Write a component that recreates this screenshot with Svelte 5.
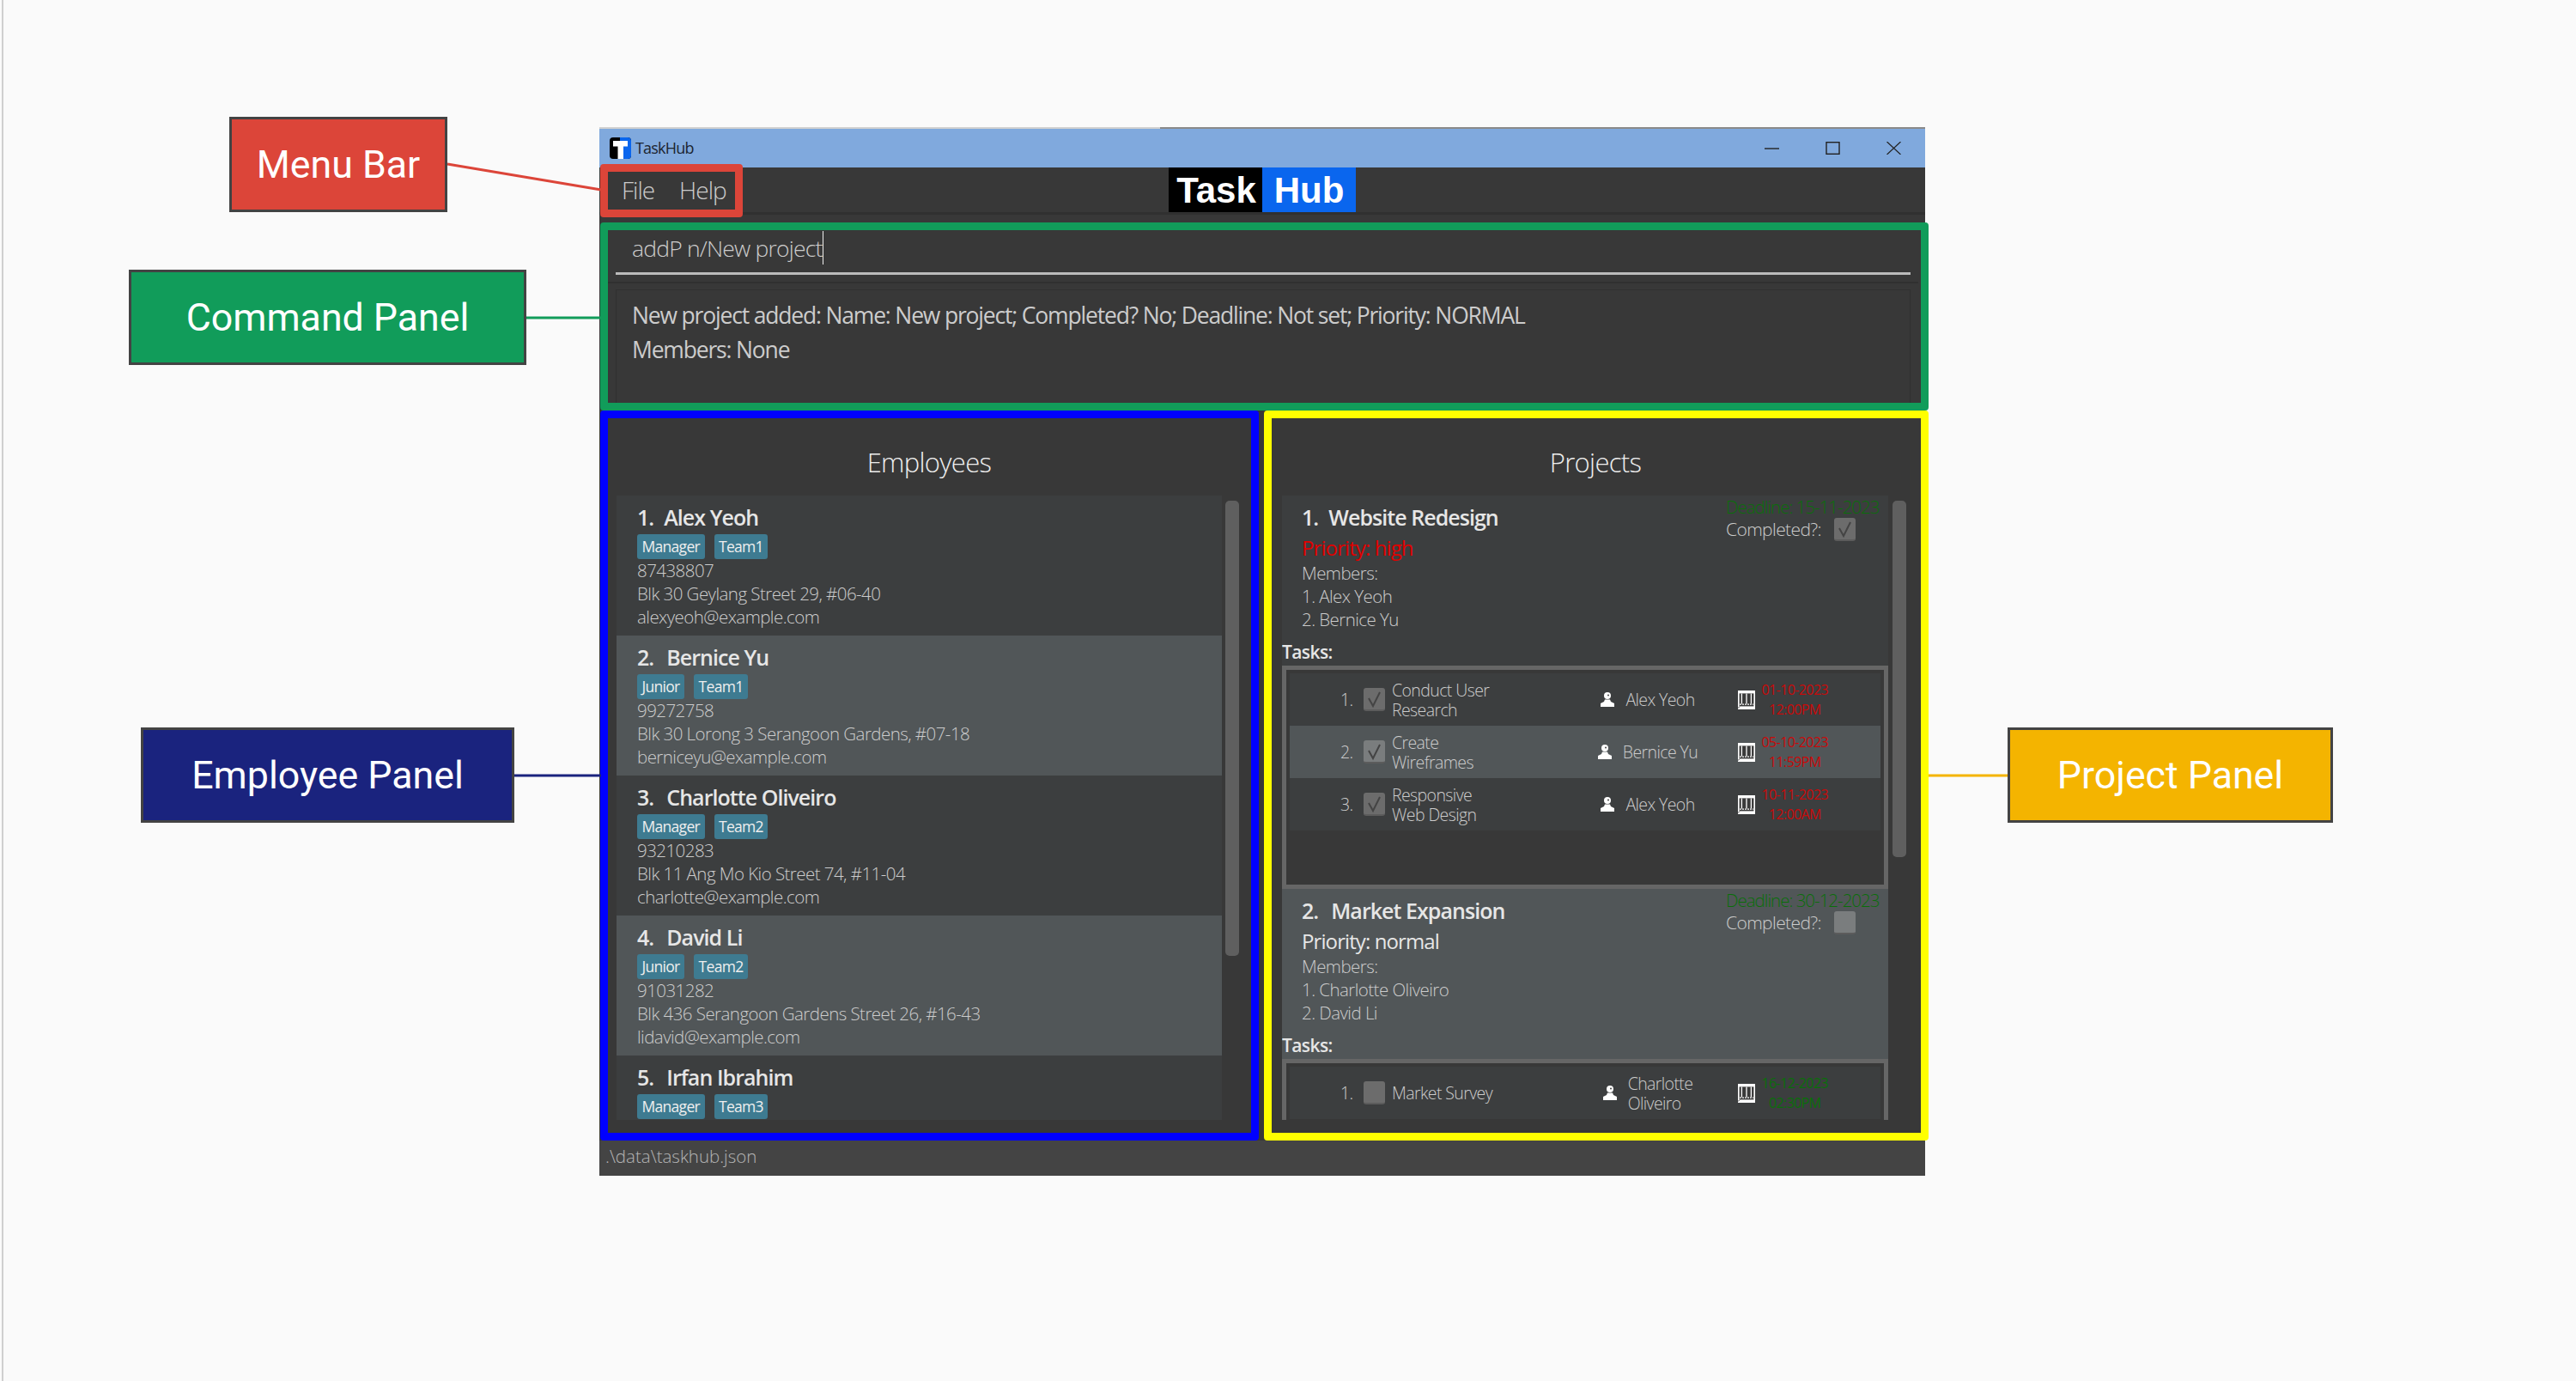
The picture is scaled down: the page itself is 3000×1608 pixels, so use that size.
<script>
  const employees = [
    { name: 'Alex Yeoh', tags: ['Manager', 'Team1'], lines: ['87438807', 'Blk 30 Geylang Street 29, #06-40', 'alexyeoh@example.com'] },
    { name: 'Bernice Yu', tags: ['Junior', 'Team1'], lines: ['99272758', 'Blk 30 Lorong 3 Serangoon Gardens, #07-18', 'berniceyu@example.com'] },
    { name: 'Charlotte Oliveiro', tags: ['Manager', 'Team2'], lines: ['93210283', 'Blk 11 Ang Mo Kio Street 74, #11-04', 'charlotte@example.com'] },
    { name: 'David Li', tags: ['Junior', 'Team2'], lines: ['91031282', 'Blk 436 Serangoon Gardens Street 26, #16-43', 'lidavid@example.com'] },
    { name: 'Irfan Ibrahim', tags: ['Manager', 'Team3'], lines: [] }
  ];
  const projects = [
    { name: 'Website Redesign', priority: 'high', deadline: '15-11-2023', done: true, members: ['Alex Yeoh', 'Bernice Yu'],
      tasks: [
        { name: 'Conduct User Research', who: 'Alex Yeoh', date: '01-10-2023', time: '12:00PM', done: true, late: true },
        { name: 'Create Wireframes', who: 'Bernice Yu', date: '05-10-2023', time: '11:59PM', done: true, late: true },
        { name: 'Responsive Web Design', who: 'Alex Yeoh', date: '10-11-2023', time: '12:00AM', done: true, late: true }
      ] },
    { name: 'Market Expansion', priority: 'normal', deadline: '30-12-2023', done: false, members: ['Charlotte Oliveiro', 'David Li'],
      tasks: [
        { name: 'Market Survey', who: 'Charlotte Oliveiro', date: '16-12-2023', time: '02:30PM', done: false, late: false }
      ] }
  ];
</script>

{#snippet check(done)}
  <span class="check">
    {#if done}
      <svg viewBox="0 0 25 27" width="25" height="27"><polyline points="6,12 11,21 19,5" fill="none" stroke="#444" stroke-width="2"/></svg>
    {/if}
  </span>
{/snippet}

<div class="page">
  <div class="window">
    <header class="titlebar">
      <div class="title">
        <svg class="appicon" viewBox="0 0 25 25" width="25" height="25">
          <rect width="25" height="25" rx="4" fill="#000"/>
          <path d="M12 0h9a4 4 0 0 1 4 4v17a4 4 0 0 1-4 4h-9z" fill="#0a66ee"/>
          <path d="M4 4h17v6.5h-5V25h-6.5V10.5H4z" fill="#fff"/>
        </svg>
        <span>TaskHub</span>
      </div>
      <div class="winctl">
        <svg viewBox="0 0 17 15" width="17" height="15"><path d="M0 8h17" stroke="#222" stroke-width="1.4"/></svg>
        <svg viewBox="0 0 17 15" width="17" height="15"><rect x="1" y="0.7" width="15" height="13.6" fill="none" stroke="#222" stroke-width="1.4"/></svg>
        <svg viewBox="0 0 17 15" width="17" height="15"><path d="M0.5 0l16 15M16.5 0l-16 15" stroke="#222" stroke-width="1.2"/></svg>
      </div>
    </header>

    <nav class="menubar">
      <div class="menu"><span>File</span><span>Help</span></div>
      <div class="logo"><span class="l-task">Task</span><span class="l-hub">Hub</span></div>
    </nav>

    <section class="command">
      <div class="input"><span class="typed">addP n/New project</span><span class="caret"></span></div>
      <div class="sep"></div>
      <div class="result">
        <p>New project added: Name: New project; Completed? No; Deadline: Not set; Priority: NORMAL</p>
        <p>Members: None</p>
      </div>
    </section>

    <main class="panels">
      <section class="panel left">
        <h2>Employees</h2>
        <div class="listwrap">
          <div class="list">
            {#each employees as e, i}
              <article class="card" class:even={i % 2 === 1}>
                <h3><span class="idx" class:first={i === 0}>{i + 1}.</span>{e.name}</h3>
                <div class="tags">{#each e.tags as t}<span class="tag">{t}</span>{/each}</div>
                {#each e.lines as line}<p>{line}</p>{/each}
              </article>
            {/each}
          </div>
          <div class="scroll emp"></div>
        </div>
      </section>

      <section class="panel right">
        <h2>Projects</h2>
        <div class="listwrap">
          <div class="list">
            {#each projects as p, i}
              <article class="project" class:even={i % 2 === 1}>
                <div class="phead">
                  <div class="pinfo">
                    <h3><span class="idx" class:first={i === 0}>{i + 1}.</span>{p.name}</h3>
                    <div class="prio" class:high={p.priority === 'high'}>Priority: {p.priority}</div>
                    <p>Members:</p>
                    {#each p.members as m, j}<p>{j + 1}. {m}</p>{/each}
                  </div>
                  <div class="pside">
                    <div class="deadline">Deadline: {p.deadline}</div>
                    <div class="completed"><span>Completed?:</span>{@render check(p.done)}</div>
                  </div>
                </div>
                <div class="tasks-label">Tasks:</div>
                <div class="tasks">
                  {#each p.tasks as t, k}
                    <div class="task" class:even={k % 2 === 1}>
                      <div class="tmain">
                        <span class="num">{k + 1}.</span>
                        {@render check(t.done)}
                        <span class="tname">{t.name}</span>
                      </div>
                      <div class="twho">
                        <svg class="person" viewBox="0 0 16 17" width="16" height="17">
                          <circle cx="8" cy="4" r="4" fill="#fff"/>
                          <circle cx="9" cy="3.6" r="1" fill="#444"/>
                          <path d="M5 8.5h6l1 2.5 4 2v4H0v-4l4-2z" fill="#fff"/>
                        </svg>
                        <span class:long={t.who.length > 12}>{t.who}</span>
                      </div>
                      <div class="tdate">
                        <svg class="cal" viewBox="0 0 20 22" width="20" height="22">
                          <path d="M0 0h20v22H0z" fill="#fff"/>
                          <path d="M1.6 3.4h16.8v15H1.6z" fill="#3a3a3a"/>
                          <path d="M4.4 3.4v12M10 3.4v12M15.4 3.4v12" stroke="#fff" stroke-width="1.3"/>
                          <path d="M2 16.2h16" stroke="#fff" stroke-width="1.2" stroke-dasharray="2 1"/>
                          <path d="M0 20.6l2-2" stroke="#3a3a3a" stroke-width="1"/>
                        </svg>
                        <div class="dt" class:late={t.late}><span>{t.date}</span><span>{t.time}</span></div>
                      </div>
                    </div>
                  {/each}
                </div>
              </article>
            {/each}
          </div>
          <div class="scroll prj"></div>
        </div>
      </section>
    </main>

    <footer class="status">.\data\taskhub.json</footer>

    <div class="frame f-menu"></div>
    <div class="frame f-cmd"></div>
    <div class="frame f-emp"></div>
    <div class="frame f-prj"></div>
  </div>

  <svg class="wires" width="3000" height="1608" viewBox="0 0 3000 1608">
    <line x1="521" y1="191" x2="700" y2="221" stroke="#dc4539" stroke-width="3"/>
    <line x1="613" y1="370" x2="700" y2="370" stroke="#119c5a" stroke-width="3"/>
    <line x1="599" y1="903" x2="700" y2="903" stroke="#1a237e" stroke-width="3"/>
    <line x1="2246" y1="903" x2="2338" y2="903" stroke="#f4b400" stroke-width="3"/>
  </svg>

  <div class="callout c-menu">Menu Bar</div>
  <div class="callout c-cmd">Command Panel</div>
  <div class="callout c-emp">Employee Panel</div>
  <div class="callout c-prj">Project Panel</div>
</div>

<style>
  :global(body) { margin: 0; background: #fafafa; }
  * { box-sizing: border-box; }
  p, h2, h3 { margin: 0; font-weight: 400; }

  .page {
    position: relative;
    width: 3000px;
    height: 1608px;
    padding: 149px 0 0 698px;
    background: #fafafa;
    overflow: hidden;
    font-family: "Open Sans", "Noto Sans", sans-serif;
  }
  .page::before {
    content: "";
    position: absolute;
    left: 2px;
    top: 0;
    bottom: 0;
    width: 2px;
    background: #cfcfcf;
  }

  .window {
    position: relative;
    width: 1544px;
    height: 1220px;
    display: flex;
    flex-direction: column;
    background: #383838;
    color: #ddd;
  }
  .window::before {
    content: "";
    position: absolute;
    left: 0;
    right: 0;
    top: -1px;
    height: 2px;
    background: linear-gradient(to right, #d0d0d0 0 653px, #8a8a8a 653px);
  }

  .titlebar {
    height: 46px;
    background: #80a9dd;
    display: flex;
    align-items: center;
    justify-content: space-between;
    padding: 0 28px 0 12px;
    color: #1c2530;
    font-size: 18px;
  }
  .title { display: flex; align-items: center; gap: 5px; letter-spacing: -0.8px; }
  .winctl { display: flex; gap: 54px; align-items: center; }

  .menubar {
    height: 55px;
    display: grid;
    grid-template-columns: 1fr auto 1fr;
    align-items: center;
    border-bottom: 3px solid #303030;
  }
  .menu {
    display: flex;
    gap: 29px;
    padding-left: 26px;
    font-size: 28px;
    letter-spacing: -1px;
    color: #ccc;
    font-weight: 300;
  }
  .logo {
    display: flex;
    height: 52px;
    font-family: "Liberation Sans", sans-serif;
    font-weight: 700;
    font-size: 42px;
    color: #fff;
    line-height: 54px;
  }
  .l-task { width: 109px; background: #000; text-align: center; padding-left: 2px; }
  .l-hub { width: 109px; background: #0a66ee; text-align: center; }

  .command {
    height: 228px;
    display: flex;
    flex-direction: column;
    padding: 0 17px 0 19px;
    font-size: 26.5px;
    font-weight: 300;
    letter-spacing: -1.18px;
    color: #ccc;
  }
  .input {
    height: 70px;
    flex: none;
    display: flex;
    align-items: center;
    padding: 10px 0 0 19px;
    border-bottom: 3px solid #bbb;
    letter-spacing: -0.8px;
  }
  .caret { width: 1px; height: 39px; background: #eee; }
  .sep { flex: none; height: 2px; margin: 8px -9px 0; background: #303030; }
  .result {
    margin-top: 7px;
    height: 133px;
    border: 1px solid #303030;
    padding: 9px 18px;
    line-height: 40px;
  }

  .panels { height: 850px; display: grid; grid-template-columns: 772px 772px; }
  .panel { display: flex; flex-direction: column; padding-top: 37px; }
  .panel.left { padding-left: 20px; }
  .panel.right { padding-left: 23px; }
  h2 { font-size: 31px; height: 62px; line-height: 46px; text-align: center; color: #eee; font-weight: 300; letter-spacing: -0.7px; }
  .panel.left h2 { width: 728px; }
  .panel.right h2 { width: 730px; }

  .listwrap { position: relative; }
  .list { height: 727px; overflow: hidden; }
  .panel.left .list { width: 705px; }
  .panel.right .list { width: 706px; }
  .scroll { position: absolute; top: 6px; width: 15.5px; border-radius: 5px; background: #5f5f5f; }
  .scroll.emp { left: 709px; height: 530px; }
  .scroll.prj { left: 711px; height: 415px; }

  .card { height: 163px; padding: 10px 24px 0; background: #3c3e3f; }
  .card.even, .project.even { background: #515658; }
  .card h3, .project h3 { font-size: 25px; font-weight: 600; color: #e6e6e6; line-height: 30px; letter-spacing: -0.95px; white-space: pre; }
  .idx { display: inline-block; margin-right: 15px; }
  .idx.first { margin-right: 12px; }
  .tags { display: flex; gap: 11px; margin: 5px 0 0; height: 29px; }
  .tag { background: #3e7b91; color: #eee; font-size: 17.5px; font-weight: 500; line-height: 29px; padding: 0 5.5px; border-radius: 3px; letter-spacing: -0.7px; }
  .card p, .project p { font-size: 20.5px; line-height: 27px; color: #ccc; font-weight: 300; letter-spacing: -0.55px; }

  .project { background: #3c3e3f; }
  .phead { display: flex; justify-content: space-between; padding: 10px 0 0 23px; height: 168px; }
  .prio { font-size: 24px; font-weight: 500; line-height: 32px; margin: 5px 0 0; color: #e6e6e6; letter-spacing: -0.9px; }
  .prio.high { color: #e00000; }
  .pside { width: 189px; margin-top: -10px; font-size: 21px; line-height: 27px; letter-spacing: -0.6px; font-weight: 300; color: #ccc; }
  .deadline { color: #0a6e0a; white-space: nowrap; font-size: 20.5px; line-height: 26px; letter-spacing: -1px; }
  .completed { display: flex; align-items: center; gap: 15px; }
  .check {
    display: block;
    flex: none;
    width: 25px;
    height: 27px;
    background: #6c6c6c;
    border-bottom: 2px solid #5c5c5c;
    border-radius: 3px;
  }
  .check svg { display: block; }
  .project.even .check { background: #7a7d7e; }
  .task.even .check { background: #7a7d7e; }
  .project.even .task .check { background: #6c6c6c; }
  .tasks-label { font-size: 21px; line-height: 28px; font-weight: 600; color: #e6e6e6; letter-spacing: -0.6px; padding-bottom: 2px; }
  .tasks {
    height: 260px;
    background: #383838;
    border: 5px solid #666;
    padding: 4px 4px;
  }
  .project.even .tasks { height: 200px; }
  .task {
    height: 61px;
    background: #3c3e3f;
    display: grid;
    grid-template-columns: 59px 288px 140px 1fr;
    align-items: center;
    font-size: 19.5px;
    letter-spacing: -0.6px;
    line-height: 23px;
    color: #ccc;
    font-weight: 300;
  }
  .task.even { background: #515658; }
  .tmain { grid-column: 2; display: flex; align-items: center; }
  .num { margin-right: 8px; min-width: 19px; }
  .tname { margin-left: 8px; width: 126px; }
  .twho { grid-column: 3; display: flex; align-items: center; justify-content: center; gap: 13px; }
  .twho span { white-space: nowrap; }
  .twho span.long { white-space: normal; width: min-content; }
  .person { flex: none; }
  .tdate { grid-column: 4; display: flex; align-items: center; justify-content: flex-end; gap: 8px; padding-right: 61px; }
  .cal { flex: none; }
  .dt { display: flex; flex-direction: column; align-items: center; color: #0a6e0a; font-size: 16px; letter-spacing: -0.6px; font-weight: 400; }
  .dt.late { color: #c80a0a; }

  .status { height: 41px; background: #444; color: #b5b5b5; font-size: 20.5px; line-height: 37px; padding-left: 7px; letter-spacing: 0; font-weight: 300; }

  .frame { position: absolute; border: 9px solid; border-radius: 4px; pointer-events: none; }
  .f-menu { left: 1px; top: 42px; width: 166px; height: 62px; border-color: #dc4539; }
  .f-cmd { left: 1px; top: 110px; width: 1547px; height: 219px; border-color: #119c5a; }
  .f-emp { left: 1px; top: 329px; width: 767px; height: 850px; border-color: #0000ff; }
  .f-prj { left: 774px; top: 329px; width: 774px; height: 850px; border-color: #ffff00; }

  .wires { position: absolute; left: 0; top: 0; pointer-events: none; }
  .callout {
    position: absolute;
    display: flex;
    align-items: center;
    justify-content: center;
    border: 3px solid #434343;
    color: #fff;
    font-family: Roboto, sans-serif;
    font-size: 44.7px;
  }
  .c-menu { left: 267px; top: 136px; width: 254px; height: 111px; background: #dc4539; }
  .c-cmd { left: 150px; top: 314px; width: 463px; height: 111px; background: #119c5a; }
  .c-emp { left: 164px; top: 847px; width: 435px; height: 111px; background: #1a237e; }
  .c-prj { left: 2338px; top: 847px; width: 379px; height: 111px; background: #f4b400; }
</style>
